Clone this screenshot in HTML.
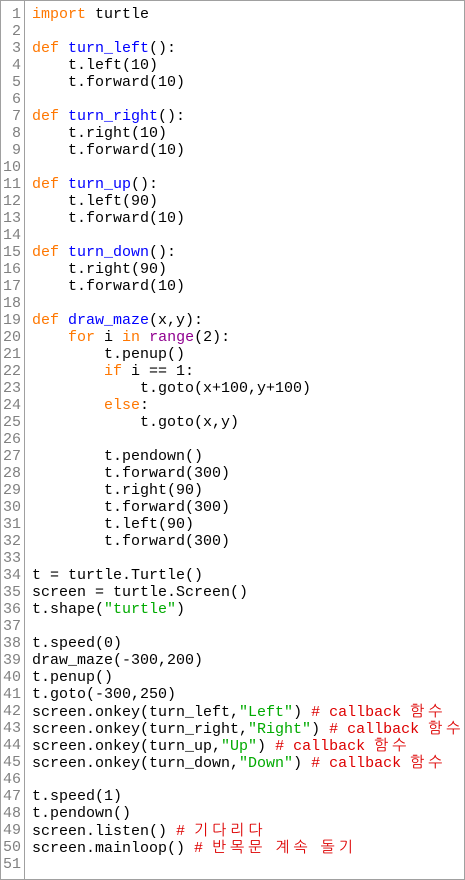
<!DOCTYPE html>
<html><head><meta charset="utf-8"><style>
html,body{margin:0;padding:0;background:#fff;}
body{width:465px;height:880px;overflow:hidden;position:relative;}
.frame{position:absolute;left:0;top:0;width:463px;height:878px;border:1px solid #a0a0a0;}
.gut{position:absolute;left:1px;top:0;width:23px;height:880px;border-right:1px solid #a0a0a0;}
.code{position:absolute;left:0;top:6px;font-family:"Liberation Mono","NanumGothic",monospace;font-size:15px;}
.l{height:17px;line-height:17px;white-space:pre;position:relative;}
.n{position:absolute;left:0;width:21px;text-align:right;color:#808080;}
.t{position:absolute;left:32px;color:#000;}
.k{color:#ff7700}.f{color:#0000ff}.s{color:#00aa00}.c{color:#dd0000}.b{color:#900090}
.h{font-family:"NanumGothic","Noto Sans CJK KR",sans-serif;letter-spacing:4px;font-size:15px;}
</style></head><body>
<div class="frame"></div><div class="gut"></div>
<div class="code">
<div class="l"><span class="n">1</span><span class="t"><span class="k">import</span> turtle</span></div>
<div class="l"><span class="n">2</span><span class="t"></span></div>
<div class="l"><span class="n">3</span><span class="t"><span class="k">def</span> <span class="f">turn_left</span>():</span></div>
<div class="l"><span class="n">4</span><span class="t">    t.left(10)</span></div>
<div class="l"><span class="n">5</span><span class="t">    t.forward(10)</span></div>
<div class="l"><span class="n">6</span><span class="t"></span></div>
<div class="l"><span class="n">7</span><span class="t"><span class="k">def</span> <span class="f">turn_right</span>():</span></div>
<div class="l"><span class="n">8</span><span class="t">    t.right(10)</span></div>
<div class="l"><span class="n">9</span><span class="t">    t.forward(10)</span></div>
<div class="l"><span class="n">10</span><span class="t"></span></div>
<div class="l"><span class="n">11</span><span class="t"><span class="k">def</span> <span class="f">turn_up</span>():</span></div>
<div class="l"><span class="n">12</span><span class="t">    t.left(90)</span></div>
<div class="l"><span class="n">13</span><span class="t">    t.forward(10)</span></div>
<div class="l"><span class="n">14</span><span class="t"></span></div>
<div class="l"><span class="n">15</span><span class="t"><span class="k">def</span> <span class="f">turn_down</span>():</span></div>
<div class="l"><span class="n">16</span><span class="t">    t.right(90)</span></div>
<div class="l"><span class="n">17</span><span class="t">    t.forward(10)</span></div>
<div class="l"><span class="n">18</span><span class="t"></span></div>
<div class="l"><span class="n">19</span><span class="t"><span class="k">def</span> <span class="f">draw_maze</span>(x,y):</span></div>
<div class="l"><span class="n">20</span><span class="t">    <span class="k">for</span> i <span class="k">in</span> <span class="b">range</span>(2):</span></div>
<div class="l"><span class="n">21</span><span class="t">        t.penup()</span></div>
<div class="l"><span class="n">22</span><span class="t">        <span class="k">if</span> i == 1:</span></div>
<div class="l"><span class="n">23</span><span class="t">            t.goto(x+100,y+100)</span></div>
<div class="l"><span class="n">24</span><span class="t">        <span class="k">else</span>:</span></div>
<div class="l"><span class="n">25</span><span class="t">            t.goto(x,y)</span></div>
<div class="l"><span class="n">26</span><span class="t"></span></div>
<div class="l"><span class="n">27</span><span class="t">        t.pendown()</span></div>
<div class="l"><span class="n">28</span><span class="t">        t.forward(300)</span></div>
<div class="l"><span class="n">29</span><span class="t">        t.right(90)</span></div>
<div class="l"><span class="n">30</span><span class="t">        t.forward(300)</span></div>
<div class="l"><span class="n">31</span><span class="t">        t.left(90)</span></div>
<div class="l"><span class="n">32</span><span class="t">        t.forward(300)</span></div>
<div class="l"><span class="n">33</span><span class="t"></span></div>
<div class="l"><span class="n">34</span><span class="t">t = turtle.Turtle()</span></div>
<div class="l"><span class="n">35</span><span class="t">screen = turtle.Screen()</span></div>
<div class="l"><span class="n">36</span><span class="t">t.shape(<span class="s">"turtle"</span>)</span></div>
<div class="l"><span class="n">37</span><span class="t"></span></div>
<div class="l"><span class="n">38</span><span class="t">t.speed(0)</span></div>
<div class="l"><span class="n">39</span><span class="t">draw_maze(-300,200)</span></div>
<div class="l"><span class="n">40</span><span class="t">t.penup()</span></div>
<div class="l"><span class="n">41</span><span class="t">t.goto(-300,250)</span></div>
<div class="l"><span class="n">42</span><span class="t">screen.onkey(turn_left,<span class="s">"Left"</span>) <span class="c"># callback <span class="h">함수</span></span></span></div>
<div class="l"><span class="n">43</span><span class="t">screen.onkey(turn_right,<span class="s">"Right"</span>) <span class="c"># callback <span class="h">함수</span></span></span></div>
<div class="l"><span class="n">44</span><span class="t">screen.onkey(turn_up,<span class="s">"Up"</span>) <span class="c"># callback <span class="h">함수</span></span></span></div>
<div class="l"><span class="n">45</span><span class="t">screen.onkey(turn_down,<span class="s">"Down"</span>) <span class="c"># callback <span class="h">함수</span></span></span></div>
<div class="l"><span class="n">46</span><span class="t"></span></div>
<div class="l"><span class="n">47</span><span class="t">t.speed(1)</span></div>
<div class="l"><span class="n">48</span><span class="t">t.pendown()</span></div>
<div class="l"><span class="n">49</span><span class="t">screen.listen() <span class="c"># <span class="h">기다리다</span></span></span></div>
<div class="l"><span class="n">50</span><span class="t">screen.mainloop() <span class="c"># <span class="h">반목문</span> <span class="h">계속</span> <span class="h">돌기</span></span></span></div>
<div class="l"><span class="n">51</span><span class="t"></span></div>
</div>
</body></html>
